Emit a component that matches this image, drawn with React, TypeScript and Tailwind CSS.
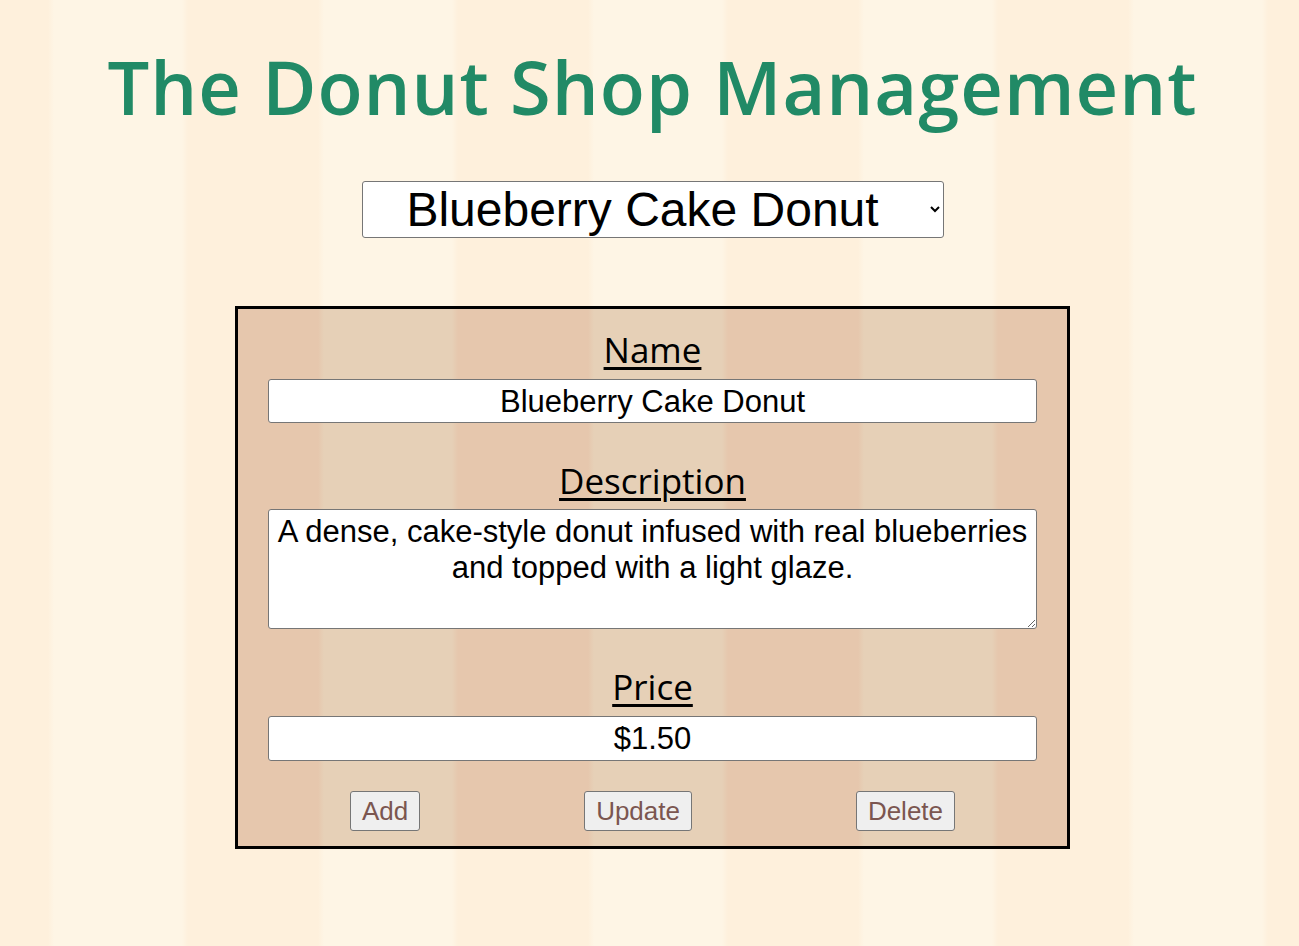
import { useState } from "react";

const donuts = [
  {
    name: "Blueberry Cake Donut",
    description:
      "A dense, cake-style donut infused with real blueberries and topped with a light glaze.",
    price: "$1.50",
  },
  {
    name: "Glazed Donut",
    description: "Classic yeast donut with a sweet sugar glaze.",
    price: "$1.00",
  },
  {
    name: "Chocolate Frosted",
    description: "Yeast donut topped with rich chocolate frosting.",
    price: "$1.25",
  },
];

export default function App() {
  const [selected, setSelected] = useState(0);
  const donut = donuts[selected];

  return (
    <div className="min-h-screen pl-1.5 bg-[repeating-linear-gradient(90deg,#fef0dc_0px,#fef0dc_48px,#fef5e5_54px,#fef5e5_182px,#fef0dc_188px,#fef0dc_270px)] font-['Liberation_Sans',Arial,sans-serif]">
      <div className="flex flex-col items-center pb-10">
        <h1 className="mt-[50px] text-[74px] leading-none font-semibold tracking-[1px] text-[#218a66] font-['Open_Sans',sans-serif]">
          The Donut Shop Management
        </h1>

        <select
          value={selected}
          onChange={(e) => setSelected(Number(e.target.value))}
          className="mt-[57px] w-[582px] h-[57px] bg-white border border-[#767676] rounded-[3px] text-[48px] text-black text-center [text-align-last:center] pr-2"
        >
          {donuts.map((d, i) => (
            <option key={d.name} value={i}>
              {d.name}
            </option>
          ))}
        </select>

        {/* edit form */}
        <div className="mt-[68px] w-[835px] border-[3px] border-black bg-fixed bg-[repeating-linear-gradient(90deg,#e6c7ad_0px,#e6c7ad_48px,#e6d0b7_54px,#e6d0b7_182px,#e6c7ad_188px,#e6c7ad_270px)] px-[30px] pt-[15px] pb-[15px]">
          <div className="flex flex-col items-center">
            <label className="text-[35px] underline decoration-[3px] underline-offset-[4px] font-['Open_Sans',sans-serif]">
              Name
            </label>
            <input
              type="text"
              value={donut.name}
              readOnly
              className="mt-[2px] w-full h-[44px] pt-[3px] bg-white border border-[#767676] rounded-[3px] text-center text-[31px] text-black"
            />
          </div>

          <div className="mt-[32px] flex flex-col items-center">
            <label className="text-[35px] underline decoration-[3px] underline-offset-[4px] font-['Open_Sans',sans-serif]">
              Description
            </label>
            <textarea
              value={donut.description}
              readOnly
              className="mt-[2px] w-full h-[120px] bg-white border border-[#767676] rounded-[3px] text-center text-[31px] leading-[36px] text-black px-[2px] pt-[4px] pb-[2px] resize"
            />
          </div>

          <div className="mt-[32px] flex flex-col items-center">
            <label className="text-[35px] underline decoration-[3px] underline-offset-[4px] font-['Open_Sans',sans-serif]">
              Price
            </label>
            <input
              type="text"
              value={donut.price}
              readOnly
              className="mt-[2px] w-full h-[45px] pt-[2px] bg-white border border-[#767676] rounded-[3px] text-center text-[31px] text-black"
            />
          </div>

          <div className="mt-[30px] flex justify-around">
            <button className="h-[40px] px-[11px] bg-[#efefef] border border-[#767676] rounded-[3px] text-[26px] text-[#7b5650]">
              Add
            </button>
            <button className="h-[40px] px-[11px] bg-[#efefef] border border-[#767676] rounded-[3px] text-[26px] text-[#7b5650]">
              Update
            </button>
            <button className="h-[40px] px-[11px] bg-[#efefef] border border-[#767676] rounded-[3px] text-[26px] text-[#7b5650]">
              Delete
            </button>
          </div>
        </div>
      </div>
    </div>
  );
}
